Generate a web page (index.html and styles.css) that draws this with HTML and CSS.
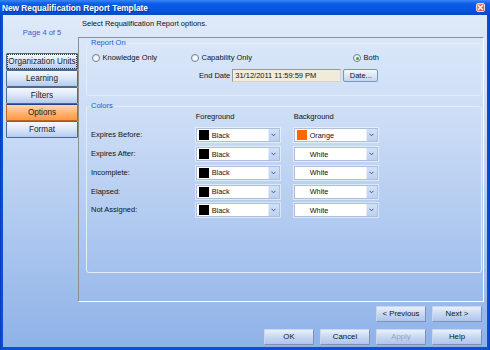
FILE: index.html
```html
<!DOCTYPE html>
<html lang="en">
<head>
    <meta charset="UTF-8">
    <title>New Requalification Report Template</title>
    <link rel="stylesheet" href="styles.css">
</head>
<body>
    <div class="window">
        <div class="titlebar">
            <span class="title">New Requalification Report Template</span>
            <span class="close">
                <svg width="7" height="7" viewBox="0 0 7 7"><path d="M1 1L6 6M6 1L1 6" stroke="#fff" stroke-width="1.4"/></svg>
            </span>
        </div>
        <div class="client">
            <div class="side">
                <div class="page">Page 4 of 5</div>
                <div class="steps">
                    <div class="step focus">Organization Units</div>
                    <div class="step">Learning</div>
                    <div class="step">Filters</div>
                    <div class="step active">Options</div>
                    <div class="step">Format</div>
                </div>
            </div>
            <div class="main">
                <div class="intro">Select Requalification Report options.</div>
                <div class="panel">
                    <fieldset class="group report">
                        <legend>Report On</legend>
                        <div class="radios">
                            <label class="radio"><span class="dot"></span>Knowledge Only</label>
                            <label class="radio"><span class="dot"></span>Capability Only</label>
                            <label class="radio"><span class="dot checked"></span>Both</label>
                        </div>
                        <div class="date-row">
                            <span class="date-label">End Date</span>
                            <span class="date-input">31/12/2011 11:59:59 PM</span>
                            <span class="date-btn">Date...</span>
                        </div>
                    </fieldset>
                    <fieldset class="group colors">
                        <legend>Colors</legend>
                        <div class="color-grid">
                            <span></span>
                            <span class="head">Foreground</span>
                            <span class="head">Background</span>

                            <span class="row-label">Expires Before:</span>
                            <div class="combo"><span class="swatch black"></span>Black<span class="arrow"><svg width="5" height="4" viewBox="0 0 5 4"><path d="M0.5 0.8L2.5 2.8L4.5 0.8" fill="none" stroke="#3c5687" stroke-width="1"/></svg></span></div>
                            <div class="combo"><span class="swatch orange"></span>Orange<span class="arrow"><svg width="5" height="4" viewBox="0 0 5 4"><path d="M0.5 0.8L2.5 2.8L4.5 0.8" fill="none" stroke="#3c5687" stroke-width="1"/></svg></span></div>

                            <span class="row-label">Expires After:</span>
                            <div class="combo"><span class="swatch black"></span>Black<span class="arrow"><svg width="5" height="4" viewBox="0 0 5 4"><path d="M0.5 0.8L2.5 2.8L4.5 0.8" fill="none" stroke="#3c5687" stroke-width="1"/></svg></span></div>
                            <div class="combo"><span class="swatch"></span>White<span class="arrow"><svg width="5" height="4" viewBox="0 0 5 4"><path d="M0.5 0.8L2.5 2.8L4.5 0.8" fill="none" stroke="#3c5687" stroke-width="1"/></svg></span></div>

                            <span class="row-label">Incomplete:</span>
                            <div class="combo"><span class="swatch black"></span>Black<span class="arrow"><svg width="5" height="4" viewBox="0 0 5 4"><path d="M0.5 0.8L2.5 2.8L4.5 0.8" fill="none" stroke="#3c5687" stroke-width="1"/></svg></span></div>
                            <div class="combo"><span class="swatch"></span>White<span class="arrow"><svg width="5" height="4" viewBox="0 0 5 4"><path d="M0.5 0.8L2.5 2.8L4.5 0.8" fill="none" stroke="#3c5687" stroke-width="1"/></svg></span></div>

                            <span class="row-label">Elapsed:</span>
                            <div class="combo"><span class="swatch black"></span>Black<span class="arrow"><svg width="5" height="4" viewBox="0 0 5 4"><path d="M0.5 0.8L2.5 2.8L4.5 0.8" fill="none" stroke="#3c5687" stroke-width="1"/></svg></span></div>
                            <div class="combo"><span class="swatch"></span>White<span class="arrow"><svg width="5" height="4" viewBox="0 0 5 4"><path d="M0.5 0.8L2.5 2.8L4.5 0.8" fill="none" stroke="#3c5687" stroke-width="1"/></svg></span></div>

                            <span class="row-label">Not Assigned:</span>
                            <div class="combo"><span class="swatch black"></span>Black<span class="arrow"><svg width="5" height="4" viewBox="0 0 5 4"><path d="M0.5 0.8L2.5 2.8L4.5 0.8" fill="none" stroke="#3c5687" stroke-width="1"/></svg></span></div>
                            <div class="combo"><span class="swatch"></span>White<span class="arrow"><svg width="5" height="4" viewBox="0 0 5 4"><path d="M0.5 0.8L2.5 2.8L4.5 0.8" fill="none" stroke="#3c5687" stroke-width="1"/></svg></span></div>
                        </div>
                    </fieldset>
                </div>
                <div class="buttons first">
                    <span class="btn">&lt; Previous</span>
                    <span class="btn">Next &gt;</span>
                </div>
                <div class="buttons second">
                    <span class="btn">OK</span>
                    <span class="btn">Cancel</span>
                    <span class="btn disabled">Apply</span>
                    <span class="btn">Help</span>
                </div>
            </div>
        </div>
    </div>
</body>
</html>
```

FILE: styles.css
```css
* {
    box-sizing: border-box;
}

body {
    margin: 0;
    width: 490px;
    height: 350px;
    overflow: hidden;
    font-family: "Liberation Sans", Arial, sans-serif;
    font-size: 7.5px;
    color: #111;
}

.window {
    width: 490px;
    height: 350px;
    display: flex;
    flex-direction: column;
    background: linear-gradient(90deg, #0838b8, #0a4fd8 1.5px, #0a4fd8 calc(100% - 1.5px), #0838b8);
}

/* Title bar */
.titlebar {
    height: 15px;
    display: flex;
    align-items: center;
    justify-content: space-between;
    padding: 0 5px 0 2px;
    background: linear-gradient(#3a86f4, #0a5de8 25%, #0556e2 65%, #0748c8);
}

.title {
    color: #fff;
    font-weight: bold;
    font-size: 8.3px;
    text-shadow: 1px 1px 0 #0b2f8c;
}

.close {
    width: 9px;
    height: 9px;
    display: flex;
    align-items: center;
    justify-content: center;
    border: 1px solid #f3d6cc;
    border-radius: 2px;
    background: linear-gradient(135deg, #f08a6a, #de4a26);
}

/* Client area */
.client {
    flex: 1;
    margin: 0 3px 3px;
    display: grid;
    grid-template-columns: 75px 406px;
    background: linear-gradient(#dfeafa, #c9dbf5 35%, #8fb2e8);
}

.side {
    padding: 13px 0 0 3px;
}

.page {
    width: 72px;
    line-height: 10px;
    text-align: center;
    color: #2f62c9;
}

.steps {
    margin-top: 15px;
    width: 72px;
}

.step {
    height: 17px;
    line-height: 15px;
    text-align: center;
    font-size: 8.2px;
    color: #1a1a1a;
    border: 1px solid #4e6896;
    border-radius: 1px;
    background: linear-gradient(#f5f8fe, #dbe6f8 50%, #b4caee);
}

.step.focus {
    outline: 1px dotted #333;
    outline-offset: -2px;
}

.step.active {
    border-color: #2b3f8f #b8672c #b8672c;
    background: linear-gradient(#ffd9ad, #ffb574 50%, #ff9845);
}

/* Main column */
.main {
    display: flex;
    flex-direction: column;
}

.intro {
    height: 22px;
    padding: 4px 0 0 4px;
    line-height: 10px;
}

.panel {
    height: 265px;
    display: flex;
    flex-direction: column;
    gap: 5px;
    padding: 0 1px 0 7px;
    border: 1px solid;
    border-color: #8e8e8e #fff #fff #8e8e8e;
}

.group {
    margin: 0;
    padding: 0;
    min-width: 0;
    border: 1px solid #e6ecf6;
    border-radius: 3px;
}

.group legend {
    margin-left: 3px;
    padding: 0 1px;
    line-height: 10px;
    color: #1d5bd6;
}

.report {
    height: 58px;
}

.colors {
    height: 172px;
}

.radios {
    display: grid;
    grid-template-columns: 99px 162px auto;
    margin-top: 5px;
    padding-left: 5px;
    height: 10px;
}

.radio {
    display: flex;
    align-items: center;
    gap: 2.5px;
    line-height: 10px;
}

.dot {
    width: 8px;
    height: 8px;
    border: 1px solid #6f7f9c;
    border-radius: 50%;
    background: radial-gradient(circle at 60% 65%, #fff, #e2e6ec);
    display: flex;
    align-items: center;
    justify-content: center;
}

.dot.checked::after {
    content: "";
    width: 3px;
    height: 3px;
    border-radius: 50%;
    background: #2fa82a;
}

.date-row {
    display: flex;
    align-items: center;
    margin-top: 6px;
    height: 13px;
    padding-left: 112px;
}

.date-label {
    margin-right: 2px;
}

.date-input {
    width: 109px;
    height: 13px;
    line-height: 11px;
    padding-left: 2px;
    background: #f1ecd9;
    border: 1px solid;
    border-color: #9a9a92 #d8d4c4 #d8d4c4 #9a9a92;
}

.date-btn {
    width: 35px;
    height: 13px;
    margin-left: 2px;
    line-height: 11px;
    text-align: center;
    border: 1px solid #7c95c0;
    border-radius: 2px;
    background: linear-gradient(#f3f7fd, #c4d5f1);
}

/* Colour selection */
.color-grid {
    display: grid;
    grid-template-columns: 90.7px 84px 84px;
    grid-template-rows: 12px repeat(5, 14px);
    column-gap: 14px;
    row-gap: 4.75px;
    padding: 0.7px 0 0 4px;
}

.head {
    line-height: 10px;
}

.row-label {
    align-self: center;
    line-height: 10px;
}

.combo {
    display: flex;
    align-items: center;
    height: 14px;
    font-size: 7.3px;
    background: #fff;
    border: 1px solid #aebfdb;
    box-shadow: 0 0 0 1px rgba(255, 255, 255, 0.5);
}

.swatch {
    width: 10px;
    height: 10px;
    margin: 0 3px 0 2px;
}

.swatch.black {
    background: #000;
}

.swatch.orange {
    background: #ff6a00;
}

.arrow {
    margin-left: auto;
    width: 11px;
    height: 12px;
    display: flex;
    align-items: center;
    justify-content: center;
    background: linear-gradient(#d3e1f7, #bcd0f0);
    border-left: 1px solid #e4ecf8;
}

/* Dialog buttons */
.buttons {
    display: flex;
    justify-content: flex-end;
    gap: 6px;
    padding-right: 2px;
}

.buttons.first {
    margin-top: 3.7px;
}

.buttons.second {
    margin-top: 7.6px;
}

.btn {
    width: 50px;
    height: 16px;
    line-height: 14px;
    text-align: center;
    font-size: 7.8px;
    color: #111;
    border: 1px solid;
    border-color: #c9d7ee #7d92b6 #7d92b6 #c9d7ee;
    border-radius: 1px;
    background: linear-gradient(#e9f0fb, #c2d4f0 60%, #aec5ec);
}

.btn.disabled {
    color: #93a3bf;
}
```
